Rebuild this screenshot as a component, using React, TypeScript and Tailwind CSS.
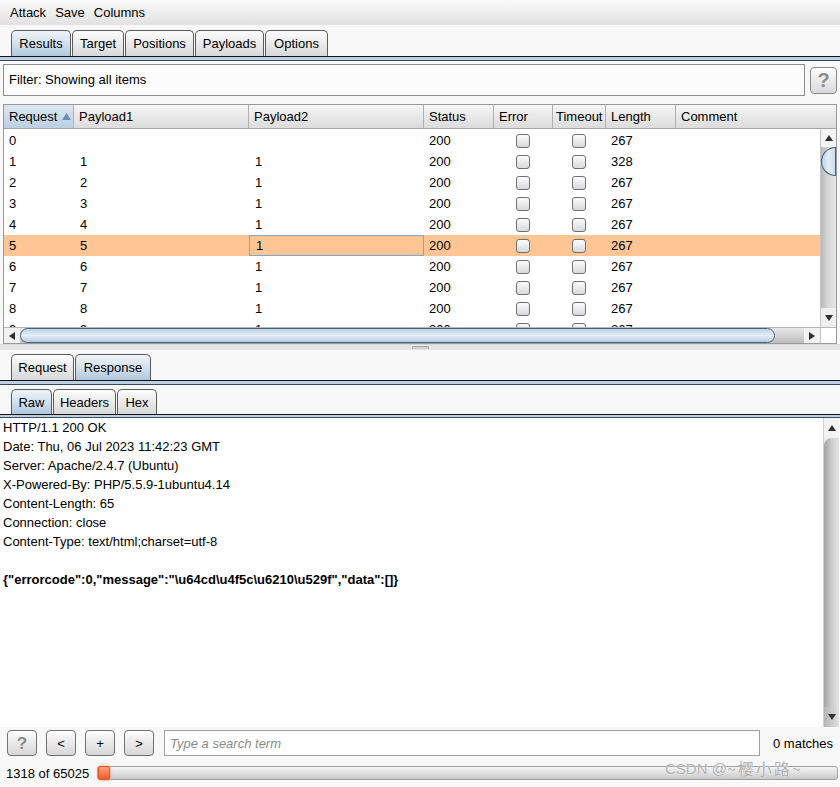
import React from 'react'

type TabProps = { label: string; selected?: boolean; w: string; h?: string }

function Tab({ label, selected, w, h = 'h-[26px]' }: TabProps) {
  return (
    <div
      className={`${w} ${h} shrink-0 flex items-center justify-center rounded-t-[5px] border border-b-0 border-[#5c5c5c] ${
        selected
          ? 'bg-gradient-to-b from-[#eef3f8] via-[#d3e1ee] to-[#b2c8dc]'
          : 'bg-gradient-to-b from-[#fdfdfd] to-[#d8d8d8]'
      }`}
    >
      {label}
    </div>
  )
}

const Up = () => (
  <svg width="8" height="6" viewBox="0 0 8 6">
    <path d="M4 0L8 6H0z" fill="#2e2e2e" />
  </svg>
)
const Down = () => (
  <svg width="8" height="6" viewBox="0 0 8 6">
    <path d="M0 0H8L4 6z" fill="#2e2e2e" />
  </svg>
)
const Left = () => (
  <svg width="6" height="8" viewBox="0 0 6 8">
    <path d="M0 4L6 0V8z" fill="#2e2e2e" />
  </svg>
)
const Right = () => (
  <svg width="6" height="8" viewBox="0 0 6 8">
    <path d="M6 4L0 0V8z" fill="#2e2e2e" />
  </svg>
)

function Check() {
  return (
    <div className="w-[14px] h-[14px] rounded-[3px] border border-[#707070] bg-gradient-to-b from-[#fcfcfc] to-[#d6d9de]" />
  )
}

function Btn({ children, grey }: { children: React.ReactNode; grey?: boolean }) {
  return (
    <div
      className={`w-[30px] h-[26px] shrink-0 flex items-center justify-center rounded-[4px] border border-[#737373] bg-gradient-to-b from-[#fdfdfd] to-[#d6d6d6] ${
        grey ? 'text-[#8a8a8a] font-bold text-[17px]' : 'text-[13px]'
      }`}
    >
      {children}
    </div>
  )
}

const cols = [
  { label: 'Request', w: 'w-[70px]', pad: 'pl-[5px]' },
  { label: 'Payload1', w: 'w-[175px]', pad: 'pl-[5px]' },
  { label: 'Payload2', w: 'w-[175px]', pad: 'pl-[5px]' },
  { label: 'Status', w: 'w-[70px]', pad: 'pl-[5px]' },
  { label: 'Error', w: 'w-[59px]', pad: 'pl-[5px]' },
  { label: 'Timeout', w: 'w-[53px]', pad: 'pl-[3px]' },
  { label: 'Length', w: 'w-[70px]', pad: 'pl-[5px]' },
]

const rows = [
  ['0', '', '', '200', '267'],
  ['1', '1', '1', '200', '328'],
  ['2', '2', '1', '200', '267'],
  ['3', '3', '1', '200', '267'],
  ['4', '4', '1', '200', '267'],
  ['5', '5', '1', '200', '267'],
  ['6', '6', '1', '200', '267'],
  ['7', '7', '1', '200', '267'],
  ['8', '8', '1', '200', '267'],
  ['9', '9', '1', '200', '267'],
]

const headers = [
  'HTTP/1.1 200 OK',
  'Date: Thu, 06 Jul 2023 11:42:23 GMT',
  'Server: Apache/2.4.7 (Ubuntu)',
  'X-Powered-By: PHP/5.5.9-1ubuntu4.14',
  'Content-Length: 65',
  'Connection: close',
  'Content-Type: text/html;charset=utf-8',
]

export default function App() {
  return (
    <div className="relative w-[840px] h-[787px] overflow-hidden bg-[#f8f8f8] font-['Liberation_Sans',Arial,sans-serif] text-[13px] text-black leading-none flex flex-col">
      {/* menu bar */}
      <div className="h-[25px] shrink-0 flex items-center gap-[9px] pl-[10px] bg-gradient-to-b from-[#fafafa] to-[#e2e2e2]">
        <span>Attack</span>
        <span>Save</span>
        <span>Columns</span>
      </div>

      {/* main tabs */}
      <div className="h-[31px] shrink-0 flex items-end gap-px pl-[11px]">
        <Tab label="Results" selected w="w-[60px]" />
        <Tab label="Target" w="w-[52px]" />
        <Tab label="Positions" w="w-[69px]" />
        <Tab label="Payloads" w="w-[69px]" />
        <Tab label="Options" w="w-[63px]" />
      </div>
      <div className="h-[5px] shrink-0 border-t border-[#141414] border-b border-b-[#34495e] bg-[#bcd0e3]" />

      {/* filter */}
      <div className="mt-[3px] h-[32px] shrink-0 flex items-center pl-[3px]">
        <div className="w-[802px] h-[32px] border border-[#8e8e8e] bg-[#fcfcfc] flex items-center pl-[5px] pb-px">
          Filter: Showing all items
        </div>
        <div className="ml-[5px] w-[27px] h-[27px] flex items-center justify-center rounded-[4px] border border-[#8a8a8a] bg-gradient-to-b from-[#fdfdfd] to-[#d9d9d9] text-[#8d8d8d] font-bold text-[20px]">
          ?
        </div>
      </div>

      {/* results table */}
      <div className="mt-[8px] mx-[3px] h-[240px] shrink-0 border border-[#9a9a9a] bg-white flex flex-col">
        <div className="h-[24px] shrink-0 flex border-b border-[#a4a4a4] bg-gradient-to-b from-[#f6f6f6] to-[#dcdcdc]">
          {cols.map((c, i) => (
            <div
              key={c.label}
              className={`${c.w} ${c.pad} shrink-0 h-full flex items-center border-r border-[#b0b0b0] ${
                i === 0 ? 'bg-gradient-to-b from-[#dce7f2] to-[#bcd0e3]' : ''
              }`}
            >
              {c.label}
              {i === 0 && (
                <svg className="ml-[5px]" width="9" height="7" viewBox="0 0 9 7">
                  <path d="M4.5 0L9 7H0z" fill="#6e90b4" />
                </svg>
              )}
            </div>
          ))}
          <div className="flex-1 h-full flex items-center pl-[5px]">Comment</div>
        </div>

        <div className="h-[198px] shrink-0 flex">
          <div className="flex-1 overflow-hidden pt-px">
            {rows.map((r, idx) => {
              const sel = idx === 5
              return (
                <div key={idx} className={`h-[21px] flex items-center ${sel ? 'bg-[#ffc594]' : ''}`}>
                  <div className="w-[70px] shrink-0 pl-[5px]">{r[0]}</div>
                  <div className="w-[175px] shrink-0 pl-[6px]">{r[1]}</div>
                  <div
                    className={`w-[175px] shrink-0 h-full flex items-center pl-[6px] ${
                      sel ? 'border border-[#7fa7cf] pl-[5px]' : ''
                    }`}
                  >
                    {r[2]}
                  </div>
                  <div className="w-[70px] shrink-0 pl-[5px]">{r[3]}</div>
                  <div className="w-[59px] shrink-0 flex justify-center pr-[2px]">
                    <Check />
                  </div>
                  <div className="w-[53px] shrink-0 flex justify-center pr-[2px]">
                    <Check />
                  </div>
                  <div className="w-[70px] shrink-0 pl-[5px]">{r[4]}</div>
                  <div className="flex-1" />
                </div>
              )
            })}
          </div>
          {/* vertical scrollbar */}
          <div className="w-[16px] shrink-0 flex flex-col border-l border-[#c4c4c4] bg-gradient-to-r from-[#b9b9b9] via-[#d8d8d8] to-[#e6e6e6]">
            <div className="h-[18px] flex items-center justify-center bg-[#f4f4f4]">
              <Up />
            </div>
            <div className="h-[29px] rounded-l-full border border-[#45627f] bg-gradient-to-r from-[#bcd1e6] via-[#e4edf6] to-[#cddced]" />
            <div className="flex-1" />
            <div className="h-[19px] flex items-center justify-center bg-[#efefef]">
              <Down />
            </div>
          </div>
        </div>

        {/* horizontal scrollbar */}
        <div className="h-[16px] shrink-0 flex border-t border-[#b8b8b8] bg-gradient-to-b from-[#e8e8e8] via-[#d3d3d3] to-[#bdbdbd]">
          <div className="w-[16px] flex items-center justify-center bg-[#f2f2f2]">
            <Left />
          </div>
          <div className="w-[755px] rounded-full border border-[#45627f] bg-gradient-to-b from-[#bed2e6] via-[#e6eef7] to-[#b6cce2]" />
          <div className="flex-1" />
          <div className="w-[16px] flex items-center justify-center bg-[#f2f2f2]">
            <Right />
          </div>
          <div className="w-[16px] bg-white border-l border-[#c4c4c4]" />
        </div>
      </div>

      {/* splitter */}
      <div className="h-[6px] shrink-0 flex items-start justify-center bg-[#e6e6e6] border-t border-[#d8d8d8]">
        <div className="mt-px w-[17px] h-[3px] rounded-t-[2px] border border-b-0 border-[#a8a8a8] bg-[#d0d0d0]" />
      </div>

      {/* request / response tabs */}
      <div className="mt-[4px] h-[26px] shrink-0 flex items-end gap-px pl-[11px]">
        <Tab label="Request" w="w-[63px]" />
        <Tab label="Response" selected w="w-[76px]" />
      </div>
      <div className="h-[5px] shrink-0 border-t border-[#141414] border-b border-b-[#34495e] bg-[#bcd0e3]" />

      {/* raw / headers / hex tabs */}
      <div className="mt-[4px] h-[25px] shrink-0 flex items-end gap-px pl-[11px]">
        <Tab label="Raw" selected w="w-[41px]" h="h-[25px]" />
        <Tab label="Headers" w="w-[63px]" h="h-[25px]" />
        <Tab label="Hex" w="w-[40px]" h="h-[25px]" />
      </div>
      <div className="h-[4px] shrink-0 border-t border-[#141414] bg-[#bcd0e3] border-b border-b-[#3c4f63]" />

      {/* response body */}
      <div className="h-[309px] shrink-0 flex bg-white">
        <div className="flex-1 pl-[3px] leading-[19px]">
          {headers.map((l) => (
            <div key={l} className="h-[19px]">
              {l}
            </div>
          ))}
          <div className="h-[19px]" />
          <div className="h-[19px] font-bold">
            {'{"errorcode":0,"message":"\\u64cd\\u4f5c\\u6210\\u529f","data":[]}'}
          </div>
        </div>
        <div className="w-[16px] shrink-0 mr-[1px] flex flex-col border-l border-[#d0d0d0] bg-[#ececec]">
          <div className="h-[20px] flex items-center justify-center bg-[#f4f4f4]">
            <Up />
          </div>
          <div className="flex-1 rounded-tl-[8px] bg-gradient-to-r from-[#a2a2a2] via-[#cdcdcd] to-[#e4e4e4]" />
          <div className="h-[20px] flex items-center justify-center bg-gradient-to-r from-[#b4b4b4] to-[#e2e2e2]">
            <Down />
          </div>
        </div>
      </div>

      {/* search bar */}
      <div className="mt-[3px] h-[26px] shrink-0 flex items-center pl-[7px] gap-[9px]">
        <Btn grey>?</Btn>
        <Btn>&lt;</Btn>
        <Btn>+</Btn>
        <Btn>&gt;</Btn>
        <div className="ml-px w-[596px] h-[26px] border border-[#a0a0a0] bg-white flex items-center pl-[5px] italic text-[#8a8a8a]">
          Type a search term
        </div>
        <span className="ml-[4px]">0 matches</span>
      </div>

      {/* status */}
      <div className="mt-[7px] h-[20px] shrink-0 flex items-center pl-[6px]">
        <span className="w-[91px] shrink-0">1318 of 65025</span>
        <div className="relative w-[741px] h-[14px] rounded-[3px] border border-[#a2a2a2] bg-gradient-to-b from-[#f4f4f4] via-[#e0e0e0] to-[#c8c8c8]">
          <div className="absolute left-0 top-[-1px] w-[12px] h-[14px] rounded-[2px] border border-[#e0582a] bg-gradient-to-b from-[#ffa07a] to-[#f05a24] shadow-[0_0_3px_#ff8a60]" />
        </div>
      </div>

      {/* watermark */}
      <div className="absolute left-[665px] top-[760px] flex items-center text-[#b0b0b0] [text-shadow:0_0_1px_#ffffff] font-['Liberation_Sans','Noto_Sans_CJK_SC',sans-serif]">
        <span className="text-[15px]">CSDN @</span>
        <span className="text-[16px] tracking-[2px] font-['Noto_Sans_CJK_SC',sans-serif]">~樱小路~</span>
      </div>
    </div>
  )
}
